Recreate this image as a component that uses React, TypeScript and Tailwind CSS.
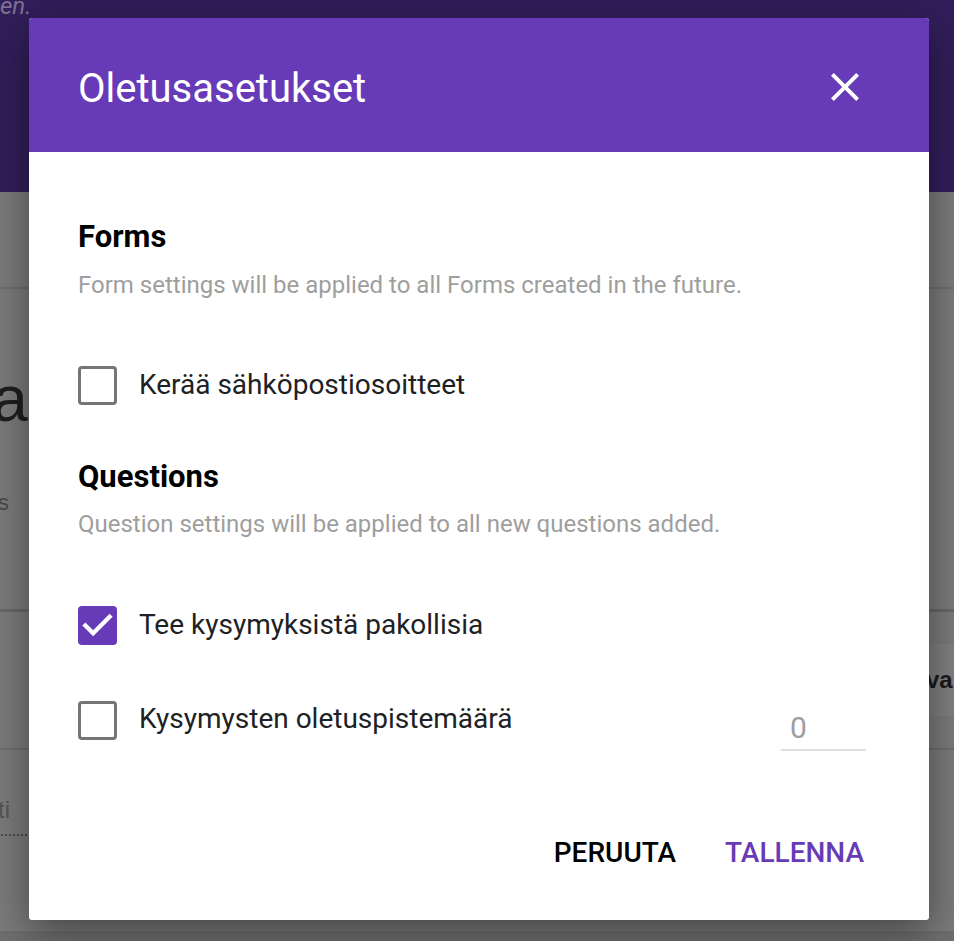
import { useState } from "react";

function Checkbox({ checked, onClick }: { checked: boolean; onClick: () => void }) {
  if (checked) {
    return (
      <button
        onClick={onClick}
        className="w-[39px] h-[39px] shrink-0 rounded-[4px] bg-[#673ab7] grid place-items-center"
      >
        <svg viewBox="3 3 18 18" width="39" height="39">
          <path d="M10 17l-5-5 1.41-1.41L10 14.17l7.59-7.59L19 8l-9 9z" fill="#fff" />
        </svg>
      </button>
    );
  }
  return (
    <button
      onClick={onClick}
      className="w-[39px] h-[39px] shrink-0 rounded-[4px] border-[3px] border-[#757575] bg-white"
    />
  );
}

function Background() {
  return (
    <div className="w-[954px] h-[941px] overflow-hidden bg-[#7b7b7b] flex flex-col font-['Roboto',sans-serif]">
      <div className="h-[192px] bg-[#321e5b] shrink-0">
        <div className="italic text-[24px] leading-[24px] text-[#7d7391] mt-[-6px]">en.</div>
      </div>
      <div className="h-[97px] shrink-0 border-b-2 border-[#6e6e6e]" />
      <div className="h-[323px] shrink-0 border-b-[3px] border-[#686868]">
        <div className="text-[64px] leading-[64px] text-[#1e1e1e] ml-[-22px] mt-[78px] font-['Liberation_Sans',sans-serif]">
          la
        </div>
        <div className="text-[22px] leading-[24px] text-[#4a4a4a] ml-[-8px] mt-[60px] font-['Liberation_Sans',sans-serif]">
          ts
        </div>
      </div>
      <div className="h-[138px] shrink-0 border-b-2 border-[#6e6e6e] flex justify-end items-center">
        <div className="w-[26px] h-[72px] bg-[#808080] flex items-center overflow-hidden">
          <span className="text-[24px] font-bold text-[#1a1a1a] ml-[-2px] font-['Liberation_Sans',sans-serif]">vas</span>
        </div>
      </div>
      <div className="h-[183px] shrink-0 border-b-2 border-[#6e6e6e]">
        <div className="w-[29px] overflow-hidden mt-[44px]">
          <div className="text-[24px] leading-[32px] text-[#555] ml-[-2px] font-['Liberation_Sans',sans-serif] border-b-2 border-dotted border-[#4a4a4a] pb-[8px] w-[29px]">
            ti
          </div>
        </div>
      </div>
      <div className="flex-1 bg-[#6f6f6f]" />
    </div>
  );
}

export default function App() {
  const [collect, setCollect] = useState(false);
  const [required, setRequired] = useState(true);
  const [points, setPoints] = useState(false);

  return (
    <div className="relative w-[954px] h-[941px] overflow-hidden">
      <Background />
      <div className="absolute left-[29px] top-[18px] w-[900px] h-[902px] bg-white rounded-[3px] shadow-[0_12px_40px_rgba(0,0,0,0.45)] overflow-hidden font-['Roboto',sans-serif]">
        <div className="h-[134px] bg-[#673ab7] flex items-center pl-[49px] pr-[60px]">
          <h1 className="text-[40px] leading-[48px] text-white flex-1 mt-[8px]">Oletusasetukset</h1>
          <button className="w-[48px] h-[48px] grid place-items-center mt-[4px]">
            <svg viewBox="0 0 24 24" width="48" height="48">
              <path
                d="M19 6.41L17.59 5 12 10.59 6.41 5 5 6.41 10.59 12 5 17.59 6.41 19 12 13.41 17.59 19 19 17.59 13.41 12z"
                fill="#fff"
              />
            </svg>
          </button>
        </div>

        <div className="pl-[49px] pr-[63px] pt-[67px]">
          <h2 className="text-[31px] leading-[36px] font-bold text-black">Forms</h2>
          <p className="mt-[16px] text-[24px] leading-[28px] text-[#9e9e9e]">
            Form settings will be applied to all Forms created in the future.
          </p>
          <div className="mt-[66px] h-[40px] flex items-center gap-[22px]">
            <Checkbox checked={collect} onClick={() => setCollect(!collect)} />
            <span className="text-[28px] text-[#202124]">Kerää sähköpostiosoitteet</span>
          </div>

          <h2 className="mt-[54px] text-[31px] leading-[36px] font-bold text-black">Questions</h2>
          <p className="mt-[15px] text-[24px] leading-[28px] text-[#9e9e9e]">
            Question settings will be applied to all new questions added.
          </p>
          <div className="mt-[67px] h-[40px] flex items-center gap-[22px]">
            <Checkbox checked={required} onClick={() => setRequired(!required)} />
            <span className="text-[28px] text-[#202124]">Tee kysymyksistä pakollisia</span>
          </div>
          <div className="mt-[55px] h-[40px] flex items-center gap-[22px]">
            <Checkbox checked={points} onClick={() => setPoints(!points)} />
            <span className="text-[28px] text-[#202124] flex-1 mt-[-2px]">Kysymysten oletuspistemäärä</span>
            <div className="w-[85px] h-[46px] border-b-2 border-[#e0e0e0] mt-[16px] flex items-center pl-[9px]">
              <span className="text-[30px] text-[#9e9e9e]">0</span>
            </div>
          </div>

          <div className="mt-[89px] h-[48px] flex justify-end items-center gap-[49px] pr-[2px]">
            <button className="text-[28px] font-medium text-black">PERUUTA</button>
            <button className="text-[28px] font-medium text-[#673ab7]">TALLENNA</button>
          </div>
        </div>
      </div>
    </div>
  );
}
